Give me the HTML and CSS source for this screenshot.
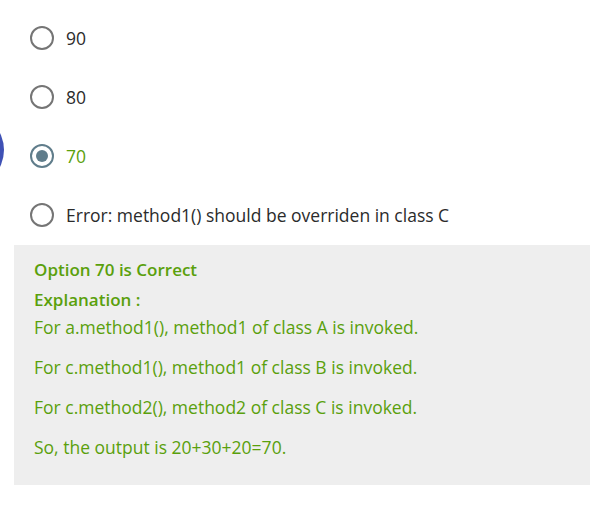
FILE: index.html
```html
<!DOCTYPE html>
<html>
<head>
<meta charset="utf-8">
<link rel="stylesheet" href="styles.css">
</head>
<body>
<div class="fab"></div>
<div class="quiz">
  <ul class="options">
    <li class="option"><span class="radio"></span><span class="label">90</span></li>
    <li class="option"><span class="radio"></span><span class="label">80</span></li>
    <li class="option selected"><span class="radio"></span><span class="label">70</span></li>
    <li class="option"><span class="radio"></span><span class="label">Error: method1() should be overriden in class C</span></li>
  </ul>
  <div class="answer">
    <div class="verdict">Option 70 is Correct</div>
    <div class="exp-title">Explanation :</div>
    <p class="first">For a.method1(), method1 of class A is invoked.</p>
    <p>For c.method1(), method1 of class B is invoked.</p>
    <p>For c.method2(), method2 of class C is invoked.</p>
    <p>So, the output is 20+30+20=70.</p>
  </div>
</div>
</body>
</html>
```

FILE: styles.css
```css
html, body {
  margin: 0;
  padding: 0;
  background: #ffffff;
  overflow: hidden;
}
body {
  font-family: "Open Sans", "Noto Sans", sans-serif;
  font-size: 17.5px;
  color: #333333;
  position: relative;
  width: 590px;
  height: 505px;
}
.fab {
  position: absolute;
  left: -72px;
  top: 112px;
  width: 76px;
  height: 76px;
  border-radius: 50%;
  background: #3f51b5;
}
.quiz {
  padding-left: 14px;
}
.options {
  list-style: none;
  margin: 0;
  padding: 26px 0 0 16px;
  display: flex;
  flex-direction: column;
  gap: 35px;
}
.option {
  display: flex;
  align-items: center;
  gap: 12px;
  height: 24px;
}
.radio {
  box-sizing: border-box;
  width: 24px;
  height: 24px;
  border: 2px solid #757575;
  border-radius: 50%;
  display: flex;
  align-items: center;
  justify-content: center;
  flex: none;
}
.selected .radio {
  border-color: #607d8b;
}
.selected .radio::after {
  content: "";
  width: 12px;
  height: 12px;
  border-radius: 50%;
  background: #607d8b;
}
.label {
  font-size: 17.5px;
  line-height: 24px;
  color: #2b2b2b;
}
.selected .label {
  color: #5aa00c;
}
.answer {
  margin-top: 18px;
  background: #eeeeee;
  padding: 12px 20px 26px 20px;
  color: #5aa00c;
}
.verdict {
  font-size: 17px;
  font-weight: 600;
  line-height: 26px;
}
.exp-title {
  font-size: 17px;
  font-weight: 600;
  line-height: 24px;
  margin-top: 5px;
}
.answer p {
  margin: 16px 0 0 0;
  line-height: 24px;
}
.answer p.first {
  margin-top: 3px;
}
```
